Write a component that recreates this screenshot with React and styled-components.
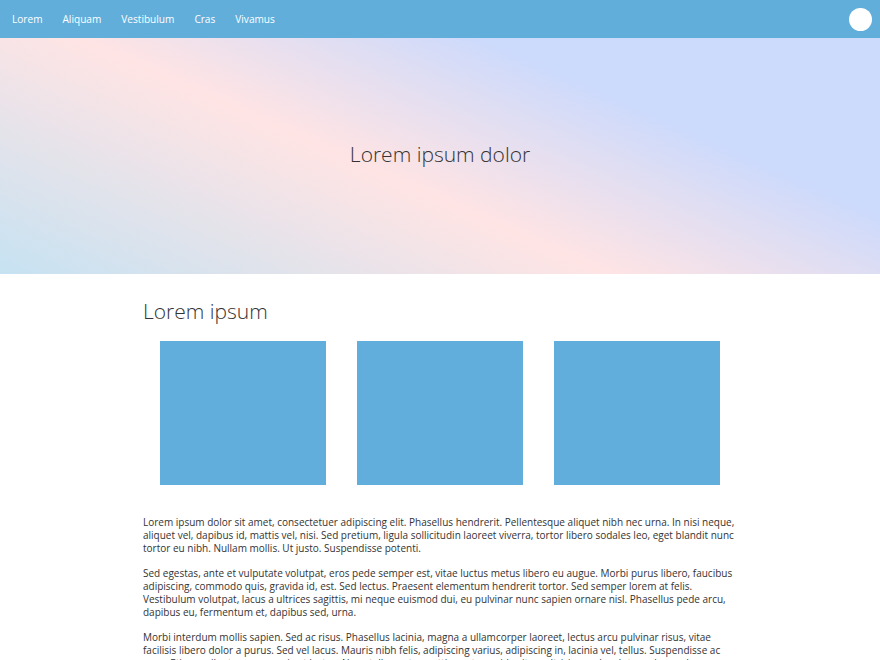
import React from "react";
import styled, { createGlobalStyle } from "styled-components";

const navItems = ["Lorem", "Aliquam", "Vestibulum", "Cras", "Vivamus"];

const paragraphs = [
  "Lorem ipsum dolor sit amet, consectetuer adipiscing elit. Phasellus hendrerit. Pellentesque aliquet nibh nec urna. In nisi neque, aliquet vel, dapibus id, mattis vel, nisi. Sed pretium, ligula sollicitudin laoreet viverra, tortor libero sodales leo, eget blandit nunc tortor eu nibh. Nullam mollis. Ut justo. Suspendisse potenti.",
  "Sed egestas, ante et vulputate volutpat, eros pede semper est, vitae luctus metus libero eu augue. Morbi purus libero, faucibus adipiscing, commodo quis, gravida id, est. Sed lectus. Praesent elementum hendrerit tortor. Sed semper lorem at felis. Vestibulum volutpat, lacus a ultrices sagittis, mi neque euismod dui, eu pulvinar nunc sapien ornare nisl. Phasellus pede arcu, dapibus eu, fermentum et, dapibus sed, urna.",
  "Morbi interdum mollis sapien. Sed ac risus. Phasellus lacinia, magna a ullamcorper laoreet, lectus arcu pulvinar risus, vitae facilisis libero dolor a purus. Sed vel lacus. Mauris nibh felis, adipiscing varius, adipiscing in, lacinia vel, tellus. Suspendisse ac urna. Etiam pellentesque mauris ut lectus. Nunc tellus ante, mattis eget, gravida vitae, ultricies ac, leo. Integer leo pede, ornare a, lacinia eu, vulputate vel, nisl.",
];

const App = () => {
  return (
    <>
      <GlobalStyle />
      <NavBar>
        <NavList>
          {navItems.map((item) => (
            <NavLink key={item}>{item}</NavLink>
          ))}
        </NavList>
        <Avatar />
      </NavBar>

      <Hero>
        <HeroTitle>Lorem ipsum dolor</HeroTitle>
      </Hero>

      <Content>
        <SectionTitle>Lorem ipsum</SectionTitle>
        <Tiles>
          <Tile />
          <Tile />
          <Tile />
        </Tiles>
        {paragraphs.map((text, index) => (
          <Paragraph key={index}>{text}</Paragraph>
        ))}
      </Content>
    </>
  );
};

const GlobalStyle = createGlobalStyle`
  * {
    box-sizing: border-box;
  }

  body {
    margin: 0;
    font-family: "Open Sans", "Liberation Sans", sans-serif;
    color: #333;
    background: #fff;
  }
`;

// NavBar styled-component
const NavBar = styled.header`
  height: 38px;
  background-color: #61aedb;
  display: flex;
  align-items: center;
  justify-content: space-between;
  padding: 0 8px 0 12px;
`;

const NavList = styled.nav`
  display: flex;
  align-items: center;
  gap: 20px;
`;

const NavLink = styled.a`
  color: #fff;
  font-size: 10.1px;
  text-decoration: none;
  cursor: pointer;
`;

const Avatar = styled.div`
  width: 23px;
  height: 23px;
  border-radius: 50%;
  background-color: #fff;
`;

// Hero styled-component
const Hero = styled.section`
  height: 236px;
  display: flex;
  align-items: center;
  justify-content: center;
  padding-bottom: 4px;
  background: linear-gradient(
    24deg,
    #c6e2f2 0%,
    #ffe4e4 43%,
    #ccdafc 72%,
    #ccdafc 100%
  );
`;

const HeroTitle = styled.h1`
  margin: 0;
  font-size: 21px;
  font-weight: 300;
  color: #333;
`;

// Content styled-component
const Content = styled.main`
  width: 594px;
  margin: 0 auto;
  padding-top: 22px;
`;

const SectionTitle = styled.h2`
  margin: 0;
  font-size: 21px;
  font-weight: 300;
  line-height: 30px;
`;

const Tiles = styled.div`
  display: flex;
  justify-content: center;
  gap: 31px;
  margin: 15px 0 31px;
`;

const Tile = styled.div`
  width: 166px;
  height: 144px;
  background-color: #61addb;
`;

const Paragraph = styled.p`
  margin: 0 0 12px;
  font-size: 10px;
  line-height: 13px;
  color: #333;
`;

export default App;
